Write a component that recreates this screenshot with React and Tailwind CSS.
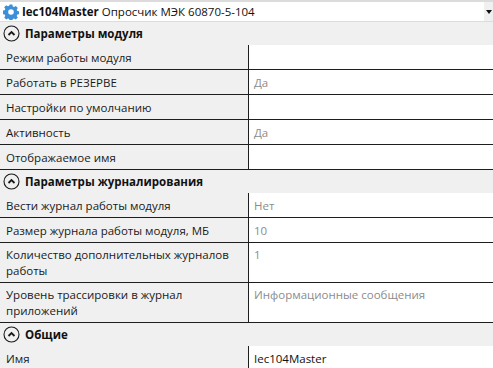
import React from 'react';

const font = { fontFamily: '"Segoe UI", "Open Sans", "Liberation Sans", sans-serif' };

const sections = [
  {
    title: 'Параметры модуля',
    rows: [
      { name: 'Режим работы модуля', value: '' },
      { name: 'Работать в РЕЗЕРВЕ', value: 'Да' },
      { name: 'Настройки по умолчанию', value: '' },
      { name: 'Активность', value: 'Да' },
      { name: 'Отображаемое имя', value: '' },
    ],
  },
  {
    title: 'Параметры журналирования',
    rows: [
      { name: 'Вести журнал работы модуля', value: 'Нет' },
      { name: 'Размер журнала работы модуля, МБ', value: '10' },
      { name: 'Количество дополнительных журналов работы', value: '1', tall: true },
      { name: 'Уровень трассировки в журнал приложений', value: 'Информационные сообщения', tall: true },
    ],
  },
  {
    title: 'Общие',
    rows: [{ name: 'Имя', value: 'Iec104Master', dark: true }],
  },
];

function Gear() {
  return (
    <svg width="16" height="16" viewBox="0 0 16 16" className="shrink-0">
      <path
        fill="#3d8fd8"
        d="M6.6 0.5h2.8l0.4 2 1.3 0.6 1.7-1.1 2 2-1.1 1.7 0.6 1.3 2 0.4v2.8l-2 0.4-0.6 1.3 1.1 1.7-2 2-1.7-1.1-1.3 0.6-0.4 2H6.6l-0.4-2-1.3-0.6-1.7 1.1-2-2 1.1-1.7-0.6-1.3-2-0.4V6.6l2-0.4 0.6-1.3-1.1-1.7 2-2 1.7 1.1 1.3-0.6z M8 5.2a2.8 2.8 0 1 0 0 5.6a2.8 2.8 0 1 0 0-5.6z"
        fillRule="evenodd"
      />
    </svg>
  );
}

function Collapse() {
  return (
    <svg width="17" height="17" viewBox="0 0 17 17" className="shrink-0">
      <circle cx="8.5" cy="8.5" r="7.5" fill="none" stroke="#1a1a1a" strokeWidth="1.1" />
      <path d="M5.5 10 L8.5 7 L11.5 10" fill="none" stroke="#1a1a1a" strokeWidth="1.8" />
    </svg>
  );
}

function Row({ row }) {
  return (
    <div className={`flex border-b border-[#1e1e1e] ${row.tall ? 'h-[40px]' : 'h-[25px]'}`}>
      <div
        className={`w-[248px] shrink-0 bg-[#f0f0f0] pl-[6px] pr-2 text-[11.5px] leading-[16px] text-[#1a1a1a] ${
          row.tall ? 'pt-[4px]' : 'pt-[5px]'
        }`}
      >
        {row.name}
      </div>
      <div
        className={`flex-1 border-l border-[#1e1e1e] bg-white pl-[5px] text-[11.5px] leading-[16px] ${
          row.tall ? 'pt-[4px]' : 'pt-[5px]'
        } ${row.dark ? 'text-[#111]' : 'text-[#8c8c8c]'}`}
      >
        {row.value}
      </div>
    </div>
  );
}

export default function App() {
  return (
    <div className="w-[493px] h-[368px] overflow-hidden bg-[#f0f0f0]" style={font}>
      {/* Object selector */}
      <div className="h-[22px] bg-[#dcdcdc] pt-[2px]">
        <div className="flex h-[19px] items-center bg-white pl-[3px]">
          <Gear />
          <span className="ml-[3px] text-[11.5px] font-bold text-[#111]">Iec104Master</span>
          <span className="ml-[3px] text-[11.5px] text-[#111]">Опросчик МЭК 60870-5-104</span>
          <div className="ml-auto flex h-full w-[9px] items-center justify-center bg-[#f0f0f0]">
            <svg width="6" height="4" viewBox="0 0 6 4">
              <path d="M0 0h6L3 4z" fill="#111" />
            </svg>
          </div>
        </div>
      </div>

      {sections.map((s) => (
        <div key={s.title}>
          <div className="flex h-[23px] items-center gap-[5px] pl-[3px]">
            <Collapse />
            <span className="text-[11.5px] font-bold text-[#111]">{s.title}</span>
          </div>
          {s.rows.map((r) => (
            <Row key={r.name} row={r} />
          ))}
        </div>
      ))}
    </div>
  );
}
